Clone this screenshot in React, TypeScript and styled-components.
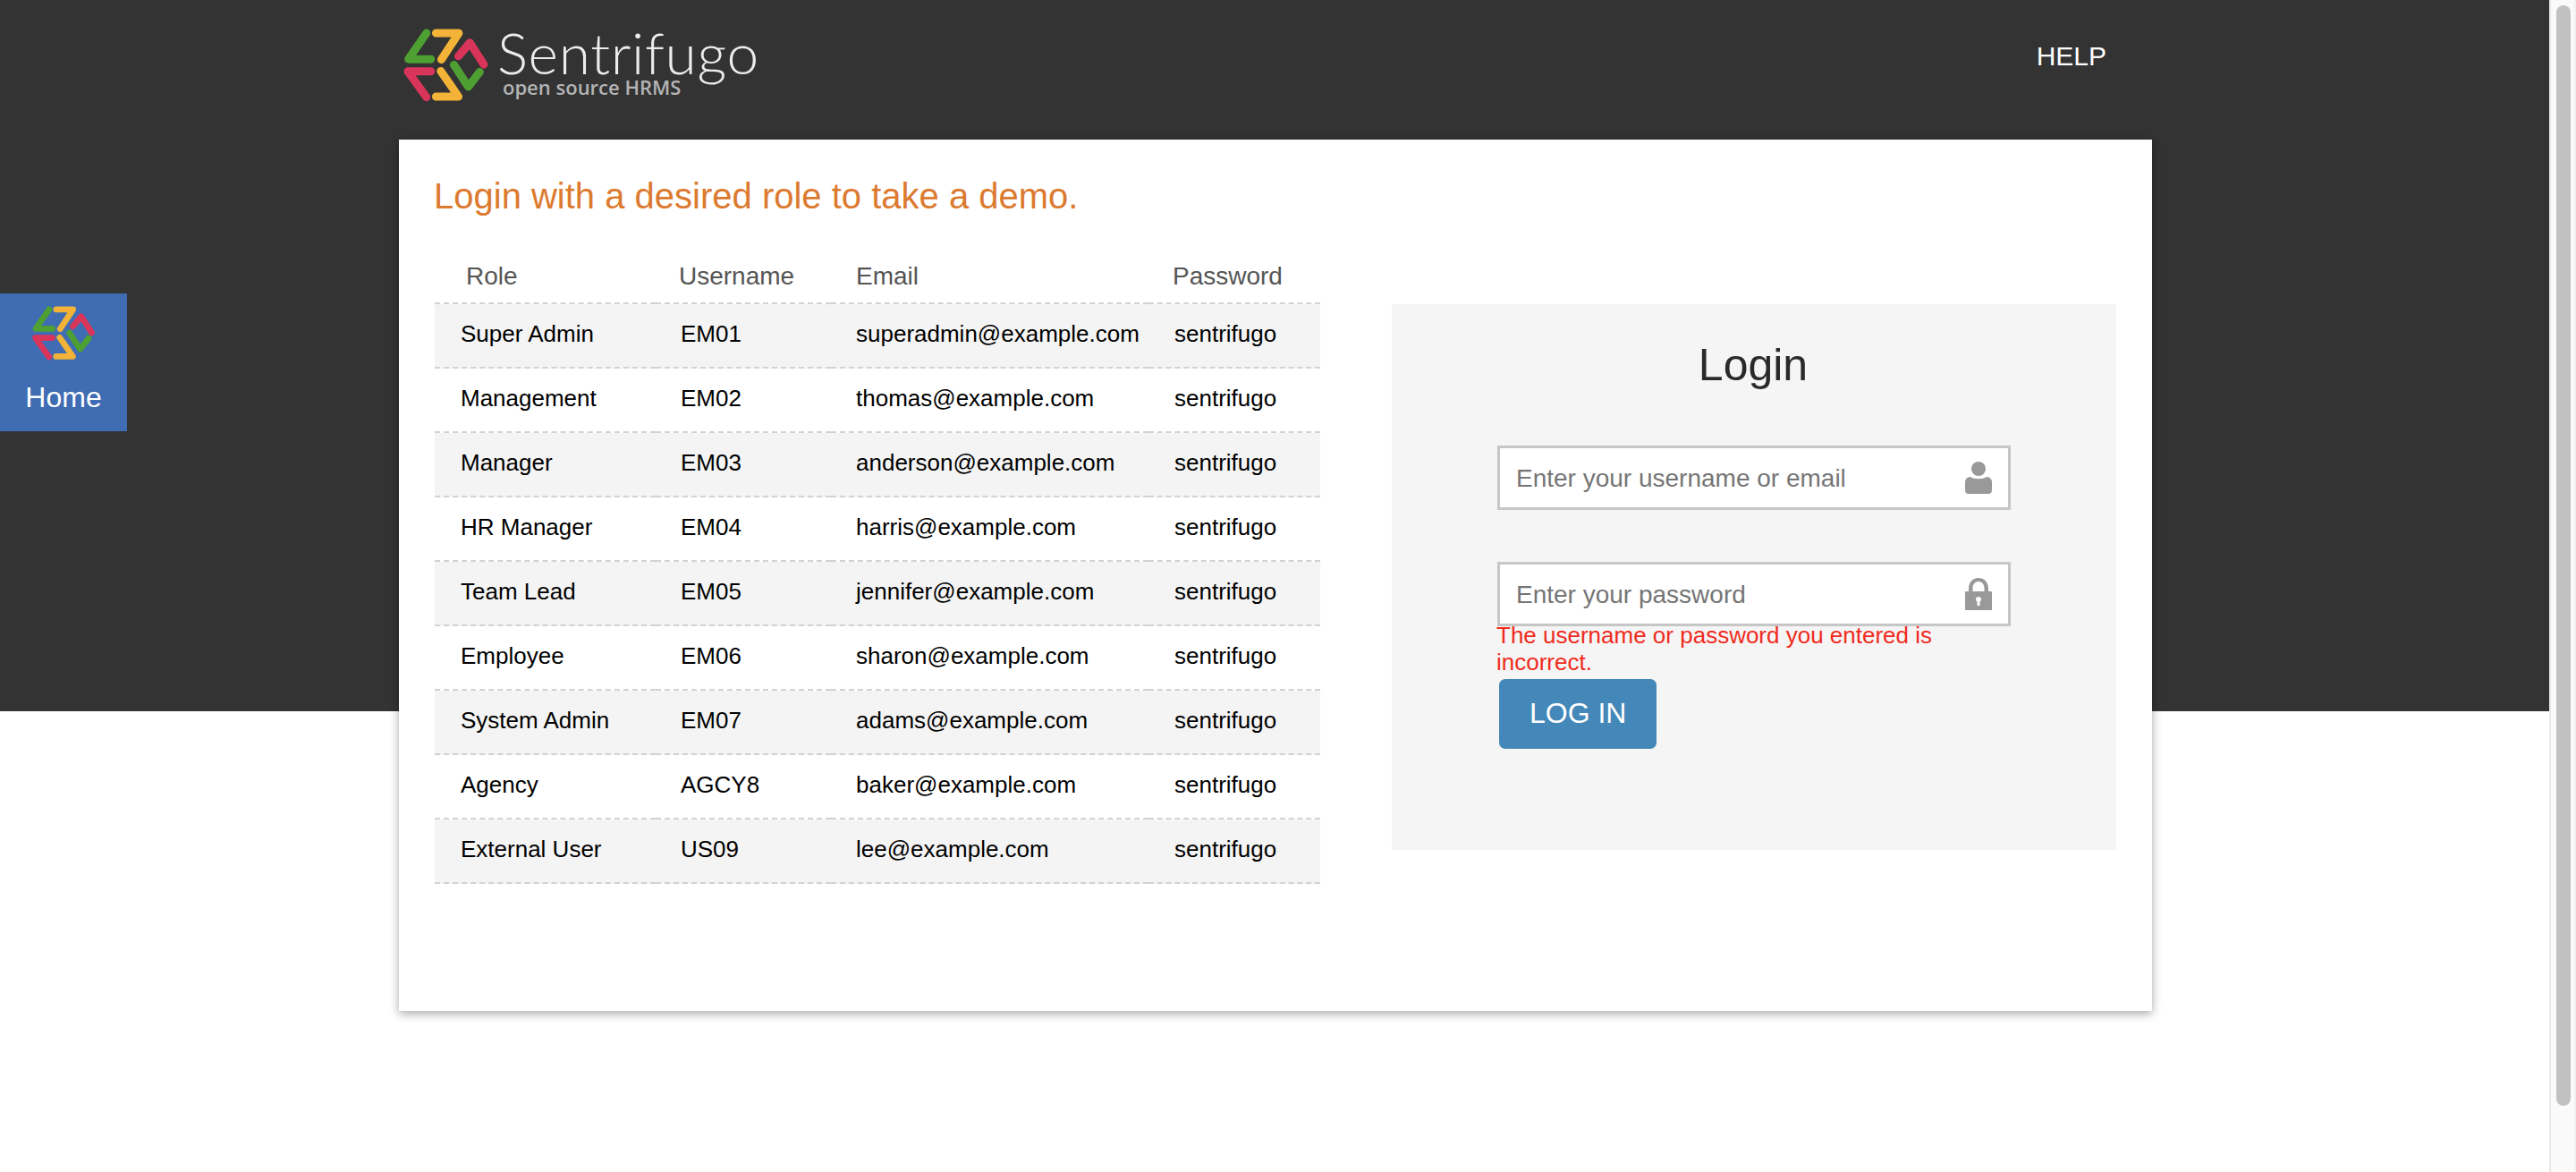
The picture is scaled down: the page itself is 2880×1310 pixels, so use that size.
import React from "react";
import styled, { createGlobalStyle } from "styled-components";

const GlobalStyle = createGlobalStyle`
  html, body {
    margin: 0;
    height: 100%;
    overflow: hidden;
    background: #fff;
    font-family: "Liberation Sans", Arial, sans-serif;
  }
`;

const Page = styled.div`
  display: flex;
  height: 1310px;
`;

const Main = styled.div`
  flex: 1;
  background: linear-gradient(#333333 0 795px, #ffffff 795px);
`;

const Scrollbar = styled.div`
  width: 30px;
  box-sizing: border-box;
  padding: 6px 4px 0 6px;
  background: #fafafa;
  border-left: 2px solid #e8e8e8;
  border-right: 2px solid #f0f0f0;
`;

const ScrollThumb = styled.div`
  width: 16px;
  height: 1230px;
  border-radius: 8px;
  background: #c1c1c1;
`;

const Wrapper = styled.div`
  width: 1960px;
  margin-left: 446px;
`;

const TopBar = styled.header`
  height: 156px;
  box-sizing: border-box;
  padding: 32px 51px 0 4px;
  display: flex;
  justify-content: space-between;
  align-items: flex-start;
`;

const Brand = styled.div`
  display: flex;
  gap: 9px;
`;

const BrandText = styled.div`
  display: flex;
  flex-direction: column;
  padding-top: 1px;
`;

const BrandName = styled.span`
  font-family: Lato, sans-serif;
  font-weight: 300;
  font-size: 64px;
  line-height: 52px;
  letter-spacing: 0.7px;
  color: #ececec;
`;

const BrandTag = styled.span`
  font-family: "Open Sans", sans-serif;
  font-weight: 600;
  font-size: 22px;
  line-height: 24px;
  margin-left: 6px;
  color: #b4b4b4;
`;

const HelpLink = styled.a`
  font-size: 30px;
  line-height: 62px;
  color: #fff;
`;

const Card = styled.section`
  height: 974px;
  box-sizing: border-box;
  padding: 40px 40px 0;
  background: #fff;
  box-shadow: 0 3px 10px rgba(0, 0, 0, 0.35);
`;

const Heading = styled.h1`
  margin: 0 0 0 -1px;
  font-size: 40px;
  font-weight: 400;
  line-height: 46px;
  color: #dc7a2f;
`;

const Columns = styled.div`
  display: flex;
  align-items: flex-start;
  gap: 80px;
  margin-top: 40px;
`;

const RoleTable = styled.table`
  width: 990px;
  table-layout: fixed;
  border-collapse: separate;
  border-spacing: 0;
`;

const HeaderCell = styled.th<{ $inset: number }>`
  height: 54px;
  padding: 0 0 2px ${(p) => p.$inset}px;
  border-bottom: 2px dashed #d2d2d2;
  font-size: 28px;
  font-weight: 400;
  text-align: left;
  color: #555;
`;

const Row = styled.tr<{ $shaded: boolean }>`
  background: ${(p) => (p.$shaded ? "#f4f4f4" : "#fff")};
`;

const Cell = styled.td<{ $inset: number }>`
  height: 67px;
  padding: 0 0 3px ${(p) => p.$inset}px;
  border-bottom: 2px dashed #d2d2d2;
  font-size: 26px;
  color: #000;
  white-space: nowrap;
`;

const LoginPanel = styled.div`
  width: 810px;
  height: 610px;
  box-sizing: border-box;
  margin-top: 58px;
  padding: 40px 118px 0;
  background: #f5f5f5;
`;

const LoginTitle = styled.h2`
  margin: 0 0 61px -2px;
  font-size: 50px;
  font-weight: 400;
  line-height: 57px;
  text-align: center;
  color: #2a2a2a;
`;

const Field = styled.div<{ $gap: number }>`
  position: relative;
  width: 574px;
  height: 72px;
  margin-bottom: ${(p) => p.$gap}px;
`;

const FieldInput = styled.input`
  width: 100%;
  height: 100%;
  box-sizing: border-box;
  padding: 1px 60px 0 18px;
  border: 3px solid #c6c6c6;
  background: #fff;
  font-family: inherit;
  font-size: 28px;
  color: #333;

  &::placeholder {
    color: #757575;
    opacity: 1;
  }
`;

const FieldIcon = styled.svg`
  position: absolute;
  right: 21px;
  top: 18px;
  width: 30px;
  height: 36px;
  fill: #999;
`;

const ErrorText = styled.p`
  margin: -5px 0 4px -1px;
  width: 574px;
  font-size: 26px;
  line-height: 30px;
  color: #f02b1d;
`;

const LoginButton = styled.button`
  display: block;
  height: 78px;
  margin-left: 2px;
  padding: 0 34px 2px;
  border: none;
  border-radius: 7px;
  background: #4488b9;
  font-family: inherit;
  font-size: 32px;
  color: #fff;
`;

const HomeTab = styled.a`
  position: fixed;
  left: 0;
  top: 328px;
  width: 142px;
  height: 154px;
  box-sizing: border-box;
  padding-top: 14px;
  display: flex;
  flex-direction: column;
  align-items: center;
  background: #3f6cb3;
`;

const HomeLabel = styled.span`
  margin-top: 18px;
  font-size: 32px;
  line-height: 46px;
  color: #fff;
`;

const Logo = ({ width, height }: { width: number; height: number }) => (
  <svg
    width={width}
    height={height}
    viewBox="60 35 290 245"
    fill="none"
    strokeWidth="27"
    strokeLinecap="round"
    strokeLinejoin="round"
  >
    <path d="M140 50 L80 137 L155 137" stroke="#4ea032" />
    <path d="M172 50 L248 50 L190 138" stroke="#f2b338" />
    <path d="M247 127 L285 82 L332 155" stroke="#d9355b" />
    <path d="M232 156 L280 229 L318 180" stroke="#4ea032" />
    <path d="M155 178 L78 178 L140 264" stroke="#d9355b" />
    <path d="M188 177 L247 262 L172 262" stroke="#f2b338" />
  </svg>
);

const users = [
  ["Super Admin", "EM01", "superadmin@example.com"],
  ["Management", "EM02", "thomas@example.com"],
  ["Manager", "EM03", "anderson@example.com"],
  ["HR Manager", "EM04", "harris@example.com"],
  ["Team Lead", "EM05", "jennifer@example.com"],
  ["Employee", "EM06", "sharon@example.com"],
  ["System Admin", "EM07", "adams@example.com"],
  ["Agency", "AGCY8", "baker@example.com"],
  ["External User", "US09", "lee@example.com"],
];

const App: React.FC = () => {
  return (
    <Page>
      <GlobalStyle />
      <HomeTab>
        <Logo width={72} height={61} />
        <HomeLabel>Home</HomeLabel>
      </HomeTab>
      <Main>
        <Wrapper>
          <TopBar>
            <Brand>
              <Logo width={97} height={82} />
              <BrandText>
                <BrandName>Sentrifugo</BrandName>
                <BrandTag>open source HRMS</BrandTag>
              </BrandText>
            </Brand>
            <HelpLink>HELP</HelpLink>
          </TopBar>
          <Card>
            <Heading>Login with a desired role to take a demo.</Heading>
            <Columns>
              <RoleTable>
                <colgroup>
                  <col width={247} />
                  <col width={196} />
                  <col width={355} />
                  <col width={192} />
                </colgroup>
                <thead>
                  <tr>
                    <HeaderCell $inset={35}>Role</HeaderCell>
                    <HeaderCell $inset={26}>Username</HeaderCell>
                    <HeaderCell $inset={28}>Email</HeaderCell>
                    <HeaderCell $inset={27}>Password</HeaderCell>
                  </tr>
                </thead>
                <tbody>
                  {users.map((user, index) => (
                    <Row key={user[1]} $shaded={index % 2 === 0}>
                      <Cell $inset={29}>{user[0]}</Cell>
                      <Cell $inset={28}>{user[1]}</Cell>
                      <Cell $inset={28}>{user[2]}</Cell>
                      <Cell $inset={29}>sentrifugo</Cell>
                    </Row>
                  ))}
                </tbody>
              </RoleTable>
              <LoginPanel>
                <LoginTitle>Login</LoginTitle>
                <Field $gap={58}>
                  <FieldInput placeholder="Enter your username or email" />
                  <FieldIcon viewBox="0 0 30 36">
                    <circle cx="15" cy="8" r="8" />
                    <path d="M6 17 C9 20 21 20 24 17 C28 17 30 20 30 23 V32 C30 34.500 28.500 36 26 36 H4 C1.500 36 0 34.500 0 32 V23 C0 20 2 17 6 17 Z" />
                  </FieldIcon>
                </Field>
                <Field $gap={0}>
                  <FieldInput placeholder="Enter your password" />
                  <FieldIcon viewBox="0 0 30 36">
                    <path
                      fillRule="evenodd"
                      d="M15 0 C22 0 26 5 26 12 V15 H29 C29.600 15 30 15.400 30 16 V35 C30 35.600 29.600 36 29 36 H1 C0.400 36 0 35.600 0 35 V16 C0 15.400 0.400 15 1 15 H4 V12 C4 5 8 0 15 0 Z M15 4 C11 4 8.500 7 8.500 12 V15 H21.500 V12 C21.500 7 19 4 15 4 Z M15 21 C13.300 21 12 22.300 12 24 C12 25.100 12.600 26 13.500 26.500 V31 H16.500 V26.500 C17.400 26 18 25.100 18 24 C18 22.300 16.700 21 15 21 Z"
                    />
                  </FieldIcon>
                </Field>
                <ErrorText>The username or password you entered is incorrect.</ErrorText>
                <LoginButton>LOG IN</LoginButton>
              </LoginPanel>
            </Columns>
          </Card>
        </Wrapper>
      </Main>
      <Scrollbar>
        <ScrollThumb />
      </Scrollbar>
    </Page>
  );
};

export default App;
